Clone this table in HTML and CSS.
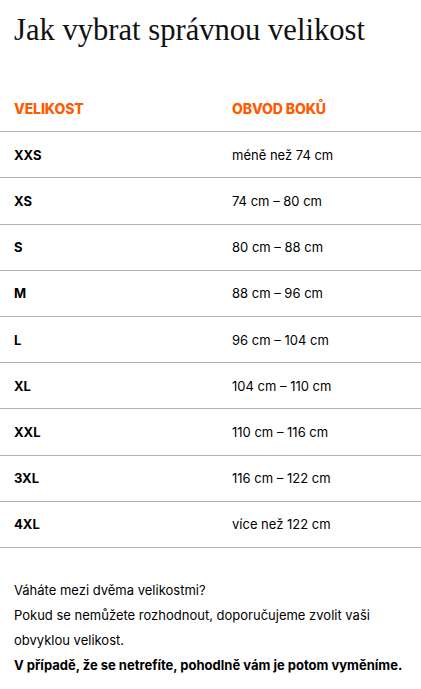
FILE: index.html
```html
<!DOCTYPE html>
<html lang="cs">
<head>
<meta charset="utf-8">
<link rel="stylesheet" href="styles.css">
</head>
<body>
<h1 class="title">Jak vybrat správnou velikost</h1>
<table class="sizes">
  <thead>
    <tr><th>VELIKOST</th><th>OBVOD BOKŮ</th></tr>
  </thead>
  <tbody>
    <tr><td class="size">XXS</td><td>méně než 74 cm</td></tr>
    <tr><td class="size">XS</td><td>74 cm – 80 cm</td></tr>
    <tr><td class="size">S</td><td>80 cm – 88 cm</td></tr>
    <tr><td class="size">M</td><td>88 cm – 96 cm</td></tr>
    <tr><td class="size">L</td><td>96 cm – 104 cm</td></tr>
    <tr><td class="size">XL</td><td>104 cm – 110 cm</td></tr>
    <tr><td class="size">XXL</td><td>110 cm – 116 cm</td></tr>
    <tr><td class="size">3XL</td><td>116 cm – 122 cm</td></tr>
    <tr><td class="size">4XL</td><td>více než 122 cm</td></tr>
  </tbody>
</table>
<div class="note">
  <p>Váháte mezi dvěma velikostmi?</p>
  <p>Pokud se nemůžete rozhodnout, doporučujeme zvolit vaši obvyklou velikost.</p>
  <p class="strong">V případě, že se netrefíte, pohodlně vám je potom vyměníme.</p>
</div>
</body>
</html>
```

FILE: styles.css
```css
html, body {
  margin: 0;
  padding: 0;
  background: #fff;
}
body {
  font-family: Inter, "Liberation Sans", sans-serif;
  color: #000;
  font-size: 13px;
}
.title {
  font-family: "Liberation Serif", serif;
  font-weight: 400;
  font-size: 30.6px;
  line-height: 36px;
  margin: 0;
  padding: 12px 14px 0;
  color: #111;
}
.sizes {
  width: 100%;
  border-collapse: collapse;
  margin-top: 38px;
}
.sizes th, .sizes td {
  text-align: left;
  padding: 0 0 0 14px;
  height: 45.2px;
  border-bottom: 1px solid #b3b3b3;
  vertical-align: middle;
}
.sizes th {
  color: #ff5a00;
  font-weight: 800;
  font-size: 14px;
  letter-spacing: -0.1px;
}
.sizes th:first-child, .sizes td:first-child {
  width: 204px;
}
.sizes td.size {
  font-weight: 700;
}
.note {
  padding: 30px 14px 0;
}
.note p {
  margin: 0;
  line-height: 25px;
}
.note .strong {
  font-weight: 700;
}
```
